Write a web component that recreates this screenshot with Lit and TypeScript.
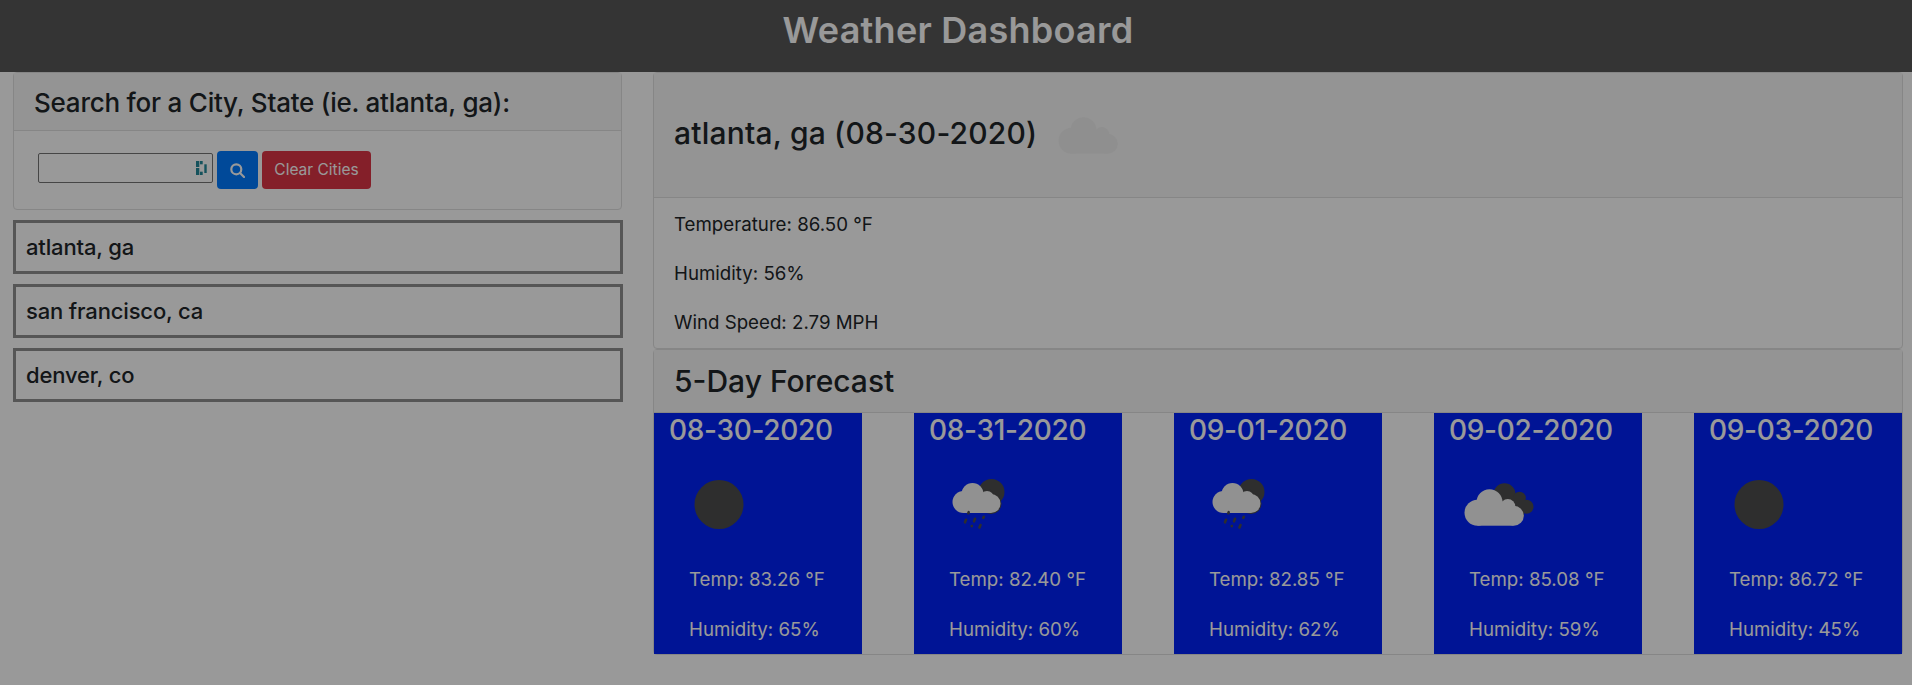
import { LitElement, css, html, svg } from "lit";
import { customElement } from "lit/decorators.js";

const big = (fill: string) => svg`
  <g fill=${fill}>
    <circle cx="28.500" cy="57.700" r="13"></circle>
    <circle cx="40.500" cy="47.300" r="13"></circle>
    <circle cx="58.800" cy="51.500" r="7.500"></circle>
    <circle cx="64.800" cy="60.700" r="10"></circle>
    <rect x="28.500" y="50" width="36" height="20.700"></rect>
  </g>
`;

const sunIcon = svg`<circle cx="50" cy="49.500" r="24.500" fill="#4d4d4d"></circle>`;

const cloudsIcon = svg`
  <g fill="#4d4d4d">
    <circle cx="55.500" cy="39.300" r="11"></circle>
    <circle cx="70.500" cy="43" r="6.300"></circle>
    <circle cx="77.500" cy="51.700" r="7"></circle>
    <rect x="55" y="42" width="20" height="20"></rect>
  </g>
  ${big("#f2f2f2")}
`;

const rainIcon = svg`
  <circle cx="62.500" cy="37" r="13" fill="#4d4d4d"></circle>
  <g fill="#4d4d4d">
    <circle cx="58" cy="43" r="8.500"></circle>
    <circle cx="62" cy="48.500" r="10.500"></circle>
  </g>
  <g fill="#f2f2f2">
    <circle cx="34.500" cy="47" r="11"></circle>
    <circle cx="43.500" cy="39" r="11"></circle>
    <circle cx="58" cy="43" r="7"></circle>
    <circle cx="62" cy="48.500" r="9.500"></circle>
    <rect x="34.500" y="42" width="27.500" height="16"></rect>
  </g>
  <g stroke="#4d4d4d" stroke-width="2.600" stroke-linecap="round">
    <path d="M39.700 57.200 L39.300 58.200"></path>
    <path d="M37 64.800 L36 67.300"></path>
    <path d="M46 63.800 L45 66.300"></path>
    <path d="M54.800 61.800 L54.300 62.900"></path>
    <path d="M42.800 71 L42.700 71.200"></path>
    <path d="M51.500 70 L50.500 72.500"></path>
  </g>
`;

const icons = { sun: sunIcon, clouds: cloudsIcon, rain: rainIcon };

const forecast = [
  { date: "08-30-2020", icon: "sun", temp: "83.26", humidity: 65 },
  { date: "08-31-2020", icon: "rain", temp: "82.40", humidity: 60 },
  { date: "09-01-2020", icon: "rain", temp: "82.85", humidity: 62 },
  { date: "09-02-2020", icon: "clouds", temp: "85.08", humidity: 59 },
  { date: "09-03-2020", icon: "sun", temp: "86.72", humidity: 45 },
] as const;

const cities = ["atlanta, ga", "san francisco, ca", "denver, co"];

@customElement("app-root")
export class AppRoot extends LitElement {
  static styles = css`
    :host {
      display: block;
      min-height: 685px;
      background: #fff;
      color: #212529;
      font-family: Inter, "Liberation Sans", sans-serif;
      font-size: 18.700px;
      line-height: 1.5;
    }

    .backdrop {
      position: fixed;
      inset: 0;
      background: rgba(0, 0, 0, 0.4);
    }

    .topbar {
      height: 72px;
      background: #575757;
      color: #fff;
      display: flex;
      align-items: center;
      justify-content: center;
      font-size: 36px;
      font-weight: 600;
      letter-spacing: 0.25px;
      line-height: 1;
      padding: 0 0 12px 4px;
      box-sizing: border-box;
    }

    .layout {
      display: grid;
      grid-template-columns: 610px 1250px;
      column-gap: 30px;
      padding: 0 9px 0 13px;
    }

    .panel {
      border: 1px solid #dfdfdf;
      border-radius: 4px;
      box-sizing: border-box;
    }

    .panel-head {
      background: #f7f7f7;
      border-bottom: 1px solid #dfdfdf;
    }

    .search-head {
      height: 58px;
      padding: 2px 20px 0;
      display: flex;
      align-items: center;
      font-size: 26px;
      font-weight: 500;
      letter-spacing: -0.23px;
      box-sizing: border-box;
    }

    .search {
      height: 138px;
      width: 609px;
    }

    .search-row {
      display: flex;
      align-items: center;
      gap: 4px;
      padding: 20px 24px;
    }

    .field {
      position: relative;
      display: flex;
      margin-bottom: 4px;
    }

    .field input {
      width: 175px;
      height: 30px;
      box-sizing: border-box;
      border: 1px solid #767676;
      border-radius: 2px;
      background: transparent;
      margin: 0;
      padding: 0;
    }

    .field svg {
      position: absolute;
      top: 8px;
      right: 5px;
    }

    .btn {
      height: 38px;
      border-radius: 4px;
      color: #fff;
      display: flex;
      align-items: center;
      justify-content: center;
      font-size: 15.500px;
      box-sizing: border-box;
    }

    .btn-search {
      width: 41px;
      background: #007bff;
    }

    .btn-clear {
      width: 109px;
      background: #dc3545;
    }

    .cities {
      display: flex;
      flex-direction: column;
      gap: 10px;
      margin-top: 10px;
    }

    .city {
      height: 54px;
      border: 3px solid #8f8f8f;
      box-sizing: border-box;
      padding: 0 10px;
      display: flex;
      align-items: center;
      font-size: 22px;
      font-weight: 500;
      letter-spacing: -0.15px;
    }

    .current-head {
      height: 125px;
      padding: 0 20px 5px;
      display: flex;
      align-items: center;
      box-sizing: border-box;
    }

    .current-head h2 {
      margin: 0;
      font-size: 30px;
      font-weight: 500;
      letter-spacing: 0.2px;
      line-height: 1.2;
    }

    .current-head svg {
      width: 100px;
      height: 100px;
      margin-left: 6px;
    }

    .current-body {
      padding: 2px 20px 0;
      height: 150px;
      display: flex;
      flex-direction: column;
      justify-content: space-around;
      box-sizing: border-box;
    }

    .forecast {
      height: 306px;
    }

    .forecast-head {
      height: 63px;
      padding: 0 20px;
      display: flex;
      align-items: center;
      font-size: 30px;
      font-weight: 500;
      box-sizing: border-box;
    }

    .days {
      display: flex;
      justify-content: space-between;
    }

    .day {
      width: 208px;
      height: 241px;
      background: #0022f8;
      color: #fff;
      box-sizing: border-box;
      padding-left: 15px;
    }

    .day-date {
      font-size: 28px;
      font-weight: 500;
      letter-spacing: -0.3px;
      line-height: 35px;
    }

    .day svg {
      display: block;
      width: 100px;
      height: 100px;
      margin-top: 7px;
    }

    .day-line {
      padding: 2px 0 0 20px;
      height: 48px;
      margin-bottom: 2px;
      display: flex;
      align-items: center;
      box-sizing: border-box;
    }
  `;

  render() {
    return html`
      <div class="topbar">Weather Dashboard</div>
      <div class="layout">
        <aside>
          <section class="panel search">
            <div class="panel-head search-head">Search for a City, State (ie. atlanta, ga):</div>
            <div class="search-row">
              <div class="field">
                <input type="text" aria-label="City" />
                <svg width="12" height="14" viewBox="0 0 12 14" fill="#238999">
                  <rect x="0" y="0" width="3.300" height="6"></rect>
                  <rect x="0" y="7" width="3.300" height="7"></rect>
                  <rect x="4" y="0" width="2.700" height="3.300"></rect>
                  <rect x="4" y="10.700" width="2.700" height="3.300"></rect>
                  <rect x="8.300" y="3.300" width="2.400" height="8.700"></rect>
                </svg>
              </div>
              <div class="btn btn-search">
                <svg width="15" height="15" viewBox="0 0 15 15" fill="none" stroke="#fff" stroke-width="2.200">
                  <circle cx="6.300" cy="6.300" r="5"></circle>
                  <path d="M10 10 L14 14" stroke-linecap="round"></path>
                </svg>
              </div>
              <div class="btn btn-clear">Clear Cities</div>
            </div>
          </section>
          <div class="cities">
            ${cities.map((city) => html`<div class="city">${city}</div>`)}
          </div>
        </aside>
        <main>
          <section class="panel">
            <div class="panel-head current-head">
              <h2>atlanta, ga (08-30-2020)</h2>
              <svg viewBox="0 0 100 100">${big("#efefef")}</svg>
            </div>
            <div class="current-body">
              <div>Temperature: 86.50 °F</div>
              <div>Humidity: 56%</div>
              <div>Wind Speed: 2.79 MPH</div>
            </div>
          </section>
          <section class="panel forecast">
            <div class="panel-head forecast-head">5-Day Forecast</div>
            <div class="days">
              ${forecast.map(
                (day) => html`
                  <div class="day">
                    <div class="day-date">${day.date}</div>
                    <svg viewBox="0 0 100 100">${icons[day.icon]}</svg>
                    <div class="day-line">Temp: ${day.temp} °F</div>
                    <div class="day-line">Humidity: ${day.humidity}%</div>
                  </div>
                `
              )}
            </div>
          </section>
        </main>
      </div>
      <div class="backdrop"></div>
    `;
  }
}
